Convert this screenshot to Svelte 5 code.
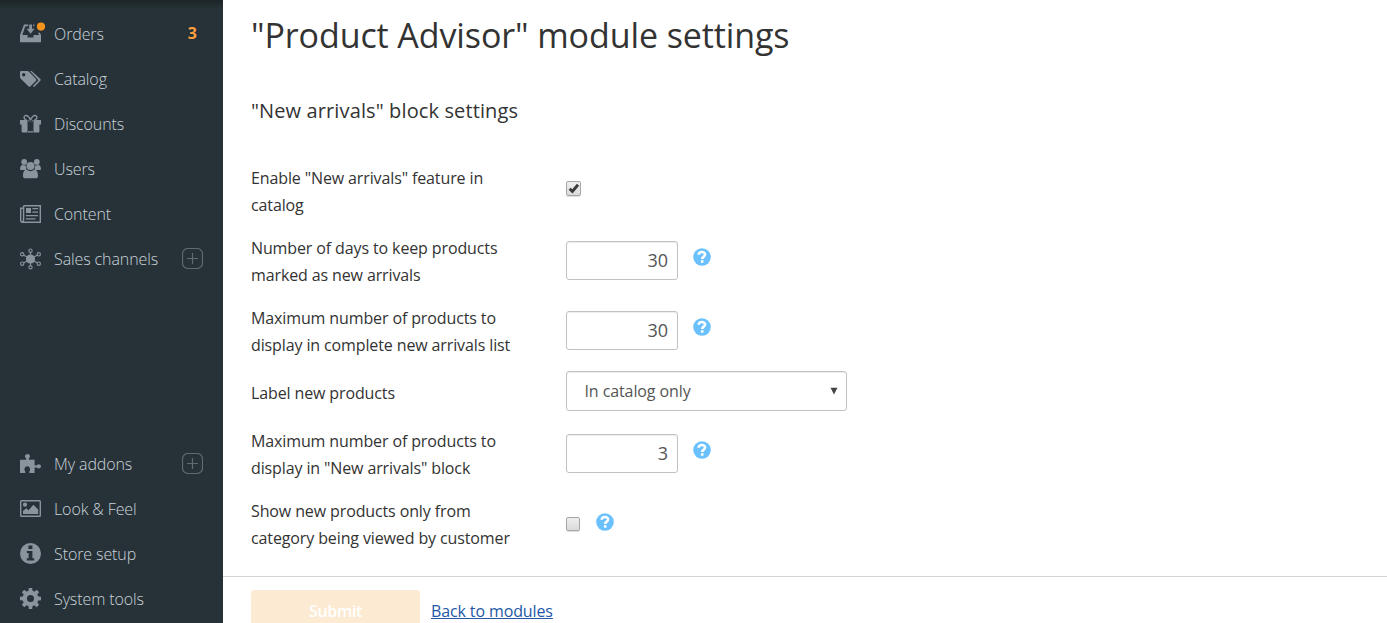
<script>
  const top = [
    { label: 'Orders', icon: 'orders', count: 3 },
    { label: 'Catalog', icon: 'tags' },
    { label: 'Discounts', icon: 'gift' },
    { label: 'Users', icon: 'users' },
    { label: 'Content', icon: 'news' },
    { label: 'Sales channels', icon: 'network', plus: true }
  ];
  const bottom = [
    { label: 'My addons', icon: 'puzzle', plus: true },
    { label: 'Look & Feel', icon: 'picture' },
    { label: 'Store setup', icon: 'info' },
    { label: 'System tools', icon: 'gear' }
  ];
  const nodes = [[10.5, 2.2], [18.8, 5.8], [18.8, 15.2], [10.5, 18.8], [2.2, 15.2], [2.2, 5.8]];
  const teeth = [0, 45, 90, 135, 180, 225, 270, 315];
  let days = $state('30');
  let maxList = $state('30');
  let maxBlock = $state('3');
  let enabled = $state(true);
  let onlyCategory = $state(false);
</script>

{#snippet glyph(name)}
  <svg class="icon" class:low={name !== 'info' && name !== 'gear'} viewBox="0 0 21 21" width="21" height="21">
    {#if name === 'orders'}
      <path d="M4 .5H8.2V2.2H5.3L2.3 11H7.6V13.6H13.5V11H19.2L18 9L19.6 8.4L21 11V18.2H0V11Z" />
      <path d="M9.2 .5H12V4.8H14.6L10.6 9.8L6.6 4.8H9.2ZM13.2 .5H14.4V2.2H13.2Z" />
      <circle class="dot" cx="21" cy="2.6" r="4.1" />
    {:else if name === 'tags'}
      <path fill-rule="evenodd" d="M0 3.2Q0 2 1.2 2H7.2Q8.2 2 9 2.8L16 10Q16.8 10.9 16 11.8L10.3 17.5Q9.4 18.2 8.6 17.5L1 10Q0 9 0 8ZM3.7 4.1A1.7 1.7 0 1 0 3.7 7.5A1.7 1.7 0 1 0 3.7 4.1Z" />
      <path d="M10 2H11.6L20.3 10Q21.2 10.9 20.3 11.8L14.2 18.1L12.8 17.2L18.6 11.2Z" />
    {:else if name === 'gift'}
      <path d="M0 6H7.5V10.5H0ZM13.5 6H21V10.5H13.5ZM1.6 10H7.5V18.6H2.8Q1.6 18.6 1.6 17.4ZM13.5 10H19.4V17.4Q19.4 18.6 18.2 18.6H13.5ZM8 6H13V7.2H8ZM8 17.2H13V18.6H8ZM8.6 7H12.4V6H8.6Z" />
      <path class="line" d="M10.5 6.3C9.2 2.5 7 .9 5.2 1.7C3.2 2.7 4 5.5 6.4 5.8M10.5 6.3C11.8 2.5 14 .9 15.8 1.7C17.8 2.7 17 5.5 14.6 5.8" />
    {:else if name === 'users'}
      <g transform="translate(0 -.5)">
        <circle cx="4.2" cy="3.4" r="2.9" /><circle cx="16.8" cy="3.4" r="2.9" />
        <path d="M0 11Q0 6.6 3 6.6Q6 6.6 6.2 9V11.4H1.2Q0 11.4 0 11ZM21 11Q21 6.6 18 6.6Q15 6.6 14.8 9V11.4H19.8Q21 11.4 21 11Z" />
        <circle cx="10.5" cy="7.4" r="4" />
        <path d="M3 17.2C3 13 4.5 11.3 6.8 11.3Q10.5 14 14.2 11.3C16.5 11.3 18 13 18 17.2Q18 19.8 15.5 19.8H5.5Q3 19.8 3 17.2Z" />
      </g>
    {:else if name === 'news'}
      <path class="line" d="M3.6 1.7H20.3V18.3H2.3Q.7 18.3 .7 16.5V4.3H3.2M3.6 1.7V16Q3.6 17.8 2.1 17.8" />
      <path d="M6 4H11V9H6ZM12.4 4H18V5.3H12.4ZM12.4 7.5H18V8.8H12.4ZM6 11H18V12.2H6ZM6 14.2H15.5V15.4H6Z" />
    {:else if name === 'network'}
      <g transform="translate(0 -.5)">
        {#each nodes as [x, y]}
          <path class="thin" d="M10.5 10.5L{10.5 + (x - 10.5) * 0.78} {10.5 + (y - 10.5) * 0.78}" />
          <circle class="thin" cx={x} cy={y} r="1.65" />
        {/each}
        <circle cx="10.5" cy="10.5" r="4.6" />
      </g>
    {:else if name === 'puzzle'}
      <path d="M0 5.7H6.2V4.4C4.1 3 5 .1 7.5 .1C10 .1 10.9 3 8.8 4.4V5.7H14.6V11.3H17C18.2 9.3 21 10.1 21 12.3C21 14.5 18.2 15.4 17 13.4H14.6V19H9.3V17.5C10.9 15.5 9.9 12.2 7.3 12.2C4.7 12.2 3.7 15.5 5.3 17.5V19H0Z" />
    {:else if name === 'picture'}
      <g transform="translate(0 -.5)">
        <rect class="line" x=".7" y="2.2" width="19.6" height="15.6" rx=".8" />
        <circle cx="5" cy="6.2" r="2.1" />
        <path d="M3 15.4V12.6L6.2 9.7L8.5 11.7L13.4 6.3L18.2 11V15.4Z" />
      </g>
    {:else if name === 'info'}
      <path fill-rule="evenodd" d="M10.5 0A10.5 10.5 0 1 0 10.5 21A10.5 10.5 0 1 0 10.5 0ZM8.4 2.5H12.4V6H8.4ZM6.8 8H12.4V15.3H14.2V17.5H6.8V15.3H8.6V10.1H6.8Z" />
    {:else}
      <g>
        {#each teeth as a}<path d="M8.3 5L8.8 0H12.2L12.7 5Z" transform="rotate({a} 10.5 10.5)" />{/each}
        <path fill-rule="evenodd" d="M10.5 2.6A7.9 7.9 0 1 0 10.5 18.4A7.9 7.9 0 1 0 10.5 2.6ZM10.5 7A3.5 3.5 0 1 1 10.5 14A3.5 3.5 0 1 1 10.5 7Z" />
      </g>
    {/if}
  </svg>
{/snippet}

{#snippet menu(items)}
  <ul>
    {#each items as item}
      <li>
        {@render glyph(item.icon)}
        <span class="name">{item.label}</span>
        {#if item.count}<b>{item.count}</b>{/if}
        {#if item.plus}
          <svg class="plus" viewBox="0 0 21 21" width="21" height="21">
            <rect x=".5" y=".5" width="20" height="20" rx="5.5" />
            <path d="M10.5 5V16M5 10.5H16" />
          </svg>
        {/if}
      </li>
    {/each}
  </ul>
{/snippet}

{#snippet help()}
  <svg class="help" viewBox="0 0 18 18" width="18" height="18">
    <circle cx="9" cy="9" r="8.8" />
    <path d="M5.7 6.7C5.9 3.2 12.2 3.2 12.1 6.6C12.1 8.7 9.2 8.5 9.2 10.9" />
    <rect x="7.9" y="12.2" width="2.6" height="2.5" />
  </svg>
{/snippet}

{#snippet check(on)}
  <svg class="tick" viewBox="0 0 12 12" width="12" height="12">
    {#if on}<path d="M1.6 5.8L4.4 8.4L10 1.8" />{/if}
  </svg>
{/snippet}

<div class="page">
  <nav>
    {@render menu(top)}
    {@render menu(bottom)}
  </nav>
  <main>
    <h1>"Product Advisor" module settings</h1>
    <h2>"New arrivals" block settings</h2>
    <form>
      <div class="row">
        <span class="label">Enable "New arrivals" feature in catalog</span>
        <button type="button" class="box big" aria-label="Enable" onclick={() => (enabled = !enabled)}>{@render check(enabled)}</button>
      </div>
      <div class="row">
        <span class="label">Number of days to keep products marked as new arrivals</span>
        <input bind:value={days} />{@render help()}
      </div>
      <div class="row">
        <span class="label">Maximum number of products to display in complete new arrivals list</span>
        <input bind:value={maxList} />{@render help()}
      </div>
      <div class="row choice">
        <span class="label">Label new products</span>
        <div class="select"><span>In catalog only</span><svg width="8" height="8" viewBox="0 0 8 8"><path d="M.5 .8H7.5L4 7.6Z" /></svg></div>
      </div>
      <div class="row">
        <span class="label">Maximum number of products to display in "New arrivals" block</span>
        <input bind:value={maxBlock} />{@render help()}
      </div>
      <div class="row last">
        <span class="label">Show new products only from category being viewed by customer</span>
        <button type="button" class="box" aria-label="Category only" onclick={() => (onlyCategory = !onlyCategory)}>{@render check(onlyCategory)}</button>{@render help()}
      </div>
    </form>
    <footer>
      <button class="submit" disabled>Submit</button>
      <a href="#modules">Back to modules</a>
    </footer>
  </main>
</div>

<style>
  :global(body) { margin: 0; overflow: hidden; }
  .page {
    display: flex; height: 623px; overflow: hidden; background: #fff;
    font: 16px/27px "Open Sans", sans-serif; color: #333;
  }
  nav {
    box-sizing: border-box; width: 223px; flex: none; padding: 11px 20px 2px;
    display: flex; flex-direction: column; justify-content: space-between;
    background: linear-gradient(#1c2427, #263238 9px);
  }
  ul { list-style: none; margin: 0; padding: 0; }
  li { display: flex; align-items: center; height: 45px; color: #cbd3da; font-weight: 300; }
  .icon { flex: none; margin-right: 13px; fill: #8b939d; overflow: visible; }
  .low { margin-top: 2px; }
  .line { fill: none; stroke: #8b939d; stroke-width: 1.4; }
  .thin { fill: none; stroke: #8b939d; stroke-width: 1.1; }
  .dot { fill: #f7941d; }
  .name { flex: 1; white-space: nowrap; padding-top: 2px; letter-spacing: -.1px; }
  li b { color: #ff9e3d; font-weight: 700; margin-right: 6px; }
  .plus { fill: none; stroke: #5f6b70; stroke-width: 1.2; }
  main { flex: 1; padding-top: 10px; }
  h1, h2 { margin: 0 0 0 28px; font-weight: 400; white-space: nowrap; }
  h1 { font-size: 34px; line-height: 50px; letter-spacing: -.1px; }
  h2 { font-size: 20px; line-height: 30px; margin-top: 36px; letter-spacing: .12px; }
  form { display: flex; flex-direction: column; gap: 16px; padding: 38px 0 25px 28px; }
  .row { display: flex; height: 54px; }
  .label { box-sizing: border-box; width: 270px; margin-right: 45px; padding-top: 1px; flex: none; letter-spacing: -.12px; }
  input {
    box-sizing: border-box; width: 112px; height: 39px; margin: 7px 15px 0 0; padding: 0 9px 2px;
    border: 1px solid #c1c1c1; border-radius: 3px; box-shadow: inset 0 1px 1px #eee;
    font: 18px "Open Sans", sans-serif; color: #555; text-align: right; outline: 0;
  }
  .help { margin-top: 14px; fill: #6ac1fd; }
  .help path { fill: none; stroke: #fff; stroke-width: 2.6; }
  .help rect { fill: #fff; }
  .choice { height: 40px; margin-top: -3px; }
  .choice .label { padding-top: 9px; }
  .select {
    box-sizing: border-box; width: 281px; height: 40px; padding: 0 8px 0 17.5px;
    display: flex; align-items: center; justify-content: space-between; letter-spacing: -.1px;
    border: 1px solid #c1c1c1; border-radius: 3px; box-shadow: inset 0 1px 1px #eee; color: #555;
  }
  .select svg { fill: #444; }
  .box {
    box-sizing: border-box; width: 14px; height: 14px; margin: 20px 16px 0 0; padding: 0;
    display: flex; align-items: center; justify-content: center; border: 1px solid #a6a6a6; border-radius: 2px;
    background: linear-gradient(#eee, #dadada); box-shadow: 0 1px 1px #ddd;
  }
  .big { width: 15px; height: 15px; margin-top: 17px; }
  .tick { fill: none; stroke: #3b3b3b; stroke-width: 2.9; flex: none; }
  .last .help { margin-top: 16px; }
  footer { display: flex; gap: 11px; border-top: 1px solid #d5d5d5; padding: 13px 0 0 28px; }
  .submit {
    width: 169px; height: 42px; padding: 0; border: 0; border-radius: 3px; background: #fcead3;
    color: #fff; font: 600 16px/42px "Open Sans", sans-serif; letter-spacing: -.3px;
  }
  a { color: #2458a6; line-height: 42px; text-decoration: underline; letter-spacing: -.12px; }
</style>
